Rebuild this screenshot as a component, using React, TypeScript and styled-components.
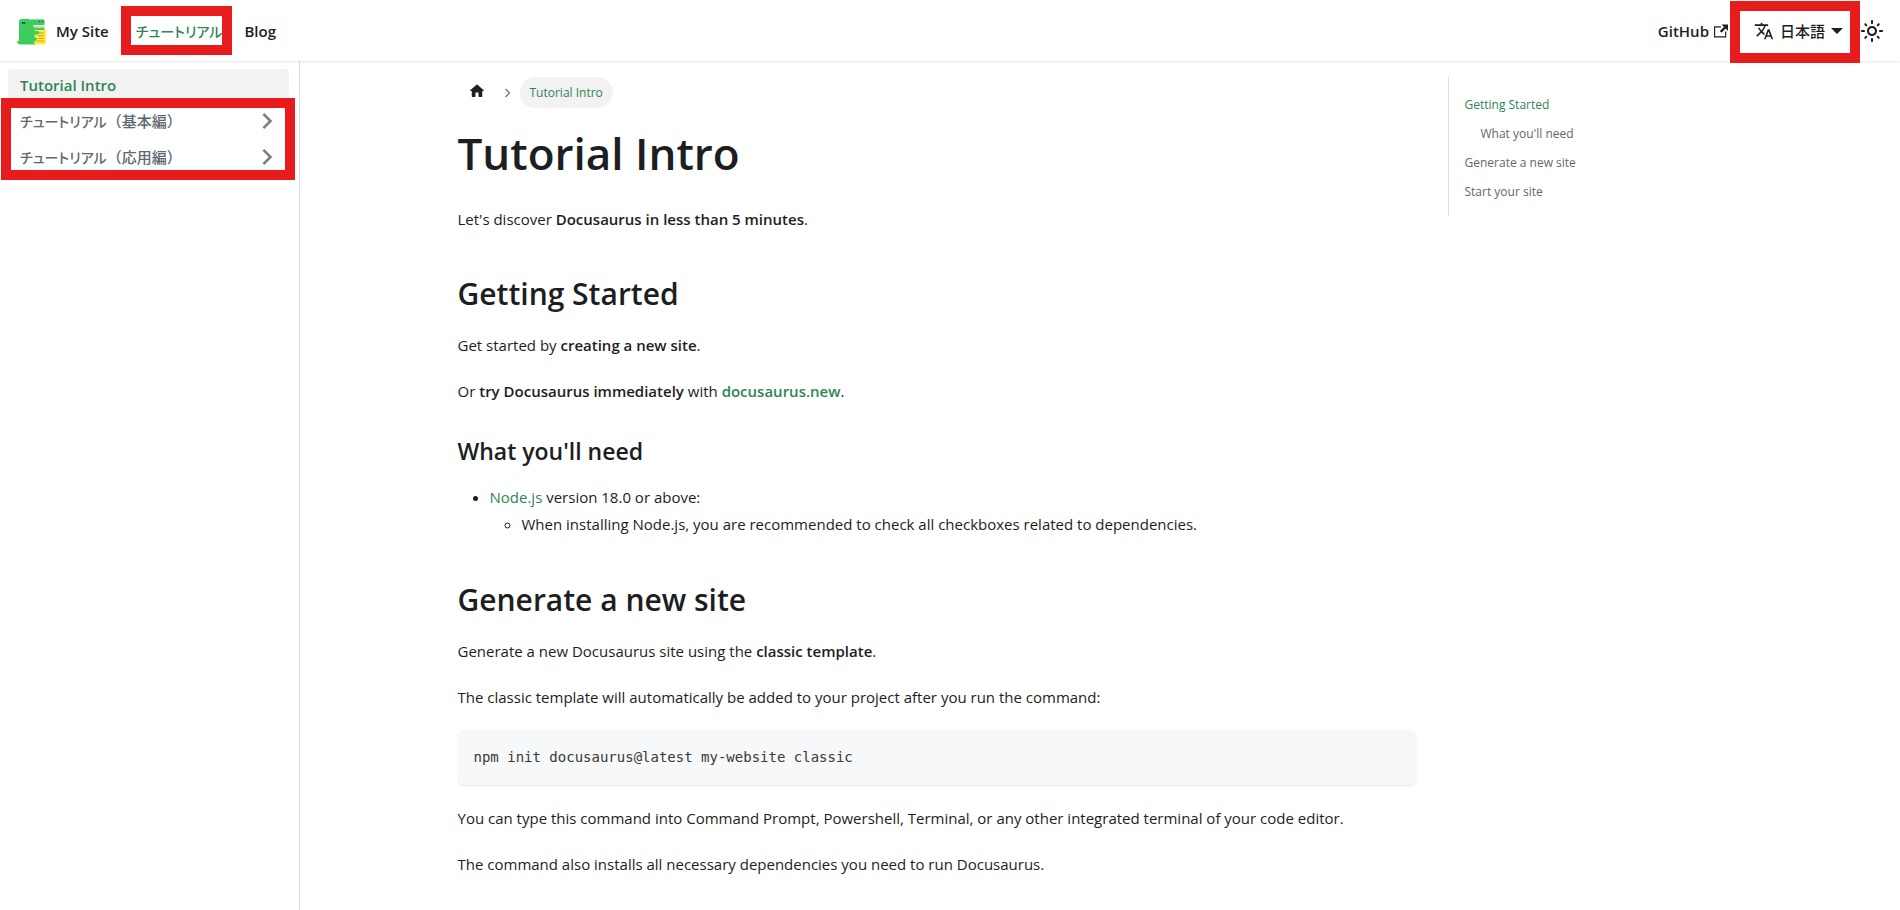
import React from "react";
import styled, { createGlobalStyle, css } from "styled-components";

const green = "#2e8555";
const ink = "#1c1e21";
const grey = "#606770";

const GlobalStyle = createGlobalStyle`
  *, *::before, *::after { box-sizing: border-box; }
  body {
    margin: 0;
    background: #fff;
    color: ${ink};
    font: 400 15px/26px "Open Sans", "Noto Sans CJK JP", sans-serif;
  }
  a { color: ${green}; text-decoration: none; }
  strong { font-weight: 600; }
`;

const Page = styled.div`
  display: flex;
  flex-direction: column;
  min-height: 100vh;
`;

const Navbar = styled.nav`
  display: flex;
  justify-content: space-between;
  align-items: center;
  height: 61px;
  padding: 0 16px;
  background: #fff;
  box-shadow: 0 1px 2px rgba(0, 0, 0, 0.1);
  z-index: 1;
`;

const NavGroup = styled.div`
  display: flex;
  align-items: center;
`;

const japanese = css`
  font-family: "Noto Sans CJK JP", sans-serif;
  font-weight: 500;
`;

const Kana = styled.span`
  font-size: 14px;
  font-feature-settings: "palt";
`;

const Brand = styled.a`
  display: flex;
  align-items: center;
  gap: 8px;
  margin-right: 17px;
  color: ${ink};
  font-weight: 600;
`;

const NavLink = styled.a<{ $active?: boolean; $jp?: boolean }>`
  position: relative;
  display: flex;
  align-items: center;
  gap: 5px;
  padding: 4px 12px;
  color: ${(p) => (p.$active ? green : ink)};
  font-weight: 600;
  ${(p) =>
    p.$jp &&
    css`
      ${japanese}
      padding: 4px 10px;
    `}
`;

const LocaleButton = styled.button`
  position: relative;
  display: flex;
  align-items: center;
  gap: 6px;
  padding: 4px 13px 4px 14px;
  border: 0;
  background: none;
  color: ${ink};
  font-size: 15px;
  line-height: 26px;
  ${japanese}
`;

const Caret = styled.span`
  border: 6px solid transparent;
  border-top-color: currentColor;
  border-bottom: 0;
`;

const ThemeButton = styled.button`
  display: flex;
  align-items: center;
  justify-content: center;
  width: 32px;
  height: 32px;
  margin-right: -4px;
  padding: 0;
  border: 0;
  background: none;
  color: ${ink};
`;

const Frame = styled.span<{ $inset: string }>`
  position: absolute;
  inset: ${(p) => p.$inset};
  border: 10px solid #e81c1c;
  pointer-events: none;
  z-index: 2;
`;

const Body = styled.div`
  display: flex;
  flex: 1;
`;

const Sidebar = styled.aside`
  flex: 0 0 300px;
  padding: 8px 10px 8px 8px;
  border-right: 1px solid #dadde1;
`;

const MenuList = styled.ul`
  position: relative;
  display: flex;
  flex-direction: column;
  gap: 4px;
  margin: 0;
  padding: 0;
  list-style: none;
`;

const MenuLink = styled.a<{ $active?: boolean; $jp?: boolean }>`
  display: flex;
  align-items: center;
  justify-content: space-between;
  height: 32px;
  padding: 0 6px 0 12px;
  border-radius: 4px;
  font-weight: 600;
  color: ${(p) => (p.$active ? green : grey)};
  background: ${(p) => (p.$active ? "#f2f2f2" : "transparent")};
  ${(p) => p.$jp && japanese}
`;

const Main = styled.main`
  flex: 1;
  min-width: 0;
  padding-left: 3px;
`;

const Container = styled.div`
  display: grid;
  grid-template-columns: 3fr 1fr;
  max-width: 1320px;
  margin: 0 auto;
`;

const Article = styled.article`
  min-width: 0;
  padding: 16px;
`;

const Crumbs = styled.ul`
  display: flex;
  align-items: center;
  margin: 0 0 13px;
  padding: 0;
  list-style: none;
  font-size: 12px;
  line-height: 19px;
`;

const Crumb = styled.li`
  display: flex;
  align-items: center;
`;

const HomeLink = styled.a`
  display: flex;
  padding: 4px 10px 8px;
  color: ${ink};
`;

const CrumbArrow = styled.span`
  display: flex;
  margin: 0 9px 0 8px;
  color: #77797c;
`;

const CrumbPill = styled.span`
  padding: 6px 10px;
  border-radius: 32px;
  background: #f2f2f2;
  color: ${green};
`;

const H1 = styled.h1`
  margin: 0 0 21px;
  font-size: 44px;
  line-height: 64px;
  font-weight: 600;
`;

const H2 = styled.h2`
  margin: 40px 0 16px;
  font-size: 30px;
  line-height: 44px;
  font-weight: 600;
`;

const H3 = styled.h3`
  margin: 30px 0 16px;
  font-size: 23px;
  line-height: 34px;
  font-weight: 600;
`;

const P = styled.p`
  margin: 0 0 20px;
`;

const List = styled.ul`
  margin: 0;
  padding-left: 32px;
  line-height: 27px;
`;

const CodeBlock = styled.pre`
  margin: 0 0 20px;
  padding: 16px;
  border-radius: 6px;
  background: #f6f8fa;
  box-shadow: 0 1px 2px rgba(0, 0, 0, 0.1);
  color: #393a34;
  line-height: 23px;
`;

const CodeText = styled.code`
  font-family: "DejaVu Sans Mono", monospace;
  font-size: 14px;
`;

const TocColumn = styled.div`
  padding: 16px;
`;

const Toc = styled.ul`
  display: flex;
  flex-direction: column;
  gap: 8px;
  margin: 0;
  padding: 17px 16px 14px;
  border-left: 1px solid #dadde1;
  list-style: none;
  font-size: 12px;
  line-height: 21px;
`;

const TocItem = styled.li<{ $level?: number }>`
  padding-left: ${(p) => (p.$level ? 16 : 0)}px;
`;

const TocLink = styled.a<{ $active?: boolean }>`
  color: ${(p) => (p.$active ? green : grey)};
`;

function Icon({ d, size }: { d: string; size: number }) {
  return (
    <svg width={size} height={size} viewBox="0 0 24 24" fill="currentColor" aria-hidden="true">
      <path d={d} />
    </svg>
  );
}

const HOME =
  "M10 19v-5h4v5c0 .55.45 1 1 1h3c.55 0 1-.45 1-1v-7h1.7c.46 0 .68-.57.33-.87L12.67 3.6c-.38-.34-.96-.34-1.34 0l-8.36 7.53c-.34.3-.13.87.33.87H5v7c0 .55.45 1 1 1h3c.55 0 1-.45 1-1z";
const EXTERNAL =
  "M21 13v10h-21v-19h12v2h-10v15h17v-8h2zm3-12h-10.988l4.035 4-6.977 7.07 2.828 2.828 6.977-7.07 4.125 4.172v-11z";
const TRANSLATE =
  "M12.87 15.07l-2.54-2.51.03-.03c1.74-1.94 2.98-4.17 3.71-6.53H17V4h-7V2H8v2H1v1.99h11.17C11.5 7.92 10.44 9.75 9 11.35 8.07 10.32 7.3 9.19 6.69 8h-2c.73 1.63 1.73 3.17 2.98 4.56l-5.09 5.02L4 19l5-5 3.11 3.11.76-2.04zM18.5 10h-2L12 22h2l1.12-3h4.75L21 22h2l-4.5-12zm-2.62 7l1.62-4.33L19.12 17h-3.24z";
const SUN =
  "M12,9c1.65,0,3,1.35,3,3s-1.35,3-3,3s-3-1.35-3-3S10.35,9,12,9 M12,7c-2.76,0-5,2.24-5,5s2.24,5,5,5s5-2.24,5-5 S14.76,7,12,7L12,7z M2,13l2,0c0.55,0,1-0.45,1-1s-0.45-1-1-1l-2,0c-0.55,0-1,0.45-1,1S1.45,13,2,13z M20,13l2,0c0.55,0,1-0.45,1-1 s-0.45-1-1-1l-2,0c-0.55,0-1,0.45-1,1S19.45,13,20,13z M11,2v2c0,0.55,0.45,1,1,1s1-0.45,1-1V2c0-0.55-0.45-1-1-1S11,1.45,11,2z M11,20v2c0,0.55,0.45,1,1,1s1-0.45,1-1v-2c0-0.55-0.45-1-1-1C11.45,19,11,19.45,11,20z M5.99,4.58c-0.39-0.39-1.03-0.39-1.41,0 c-0.39,0.39-0.39,1.03,0,1.41l1.06,1.06c0.39,0.39,1.03,0.39,1.41,0s0.39-1.03,0-1.41L5.99,4.58z M18.36,16.95 c-0.39-0.39-1.03-0.39-1.41,0c-0.39,0.39-0.39,1.03,0,1.41l1.06,1.06c0.39,0.39,1.03,0.39,1.41,0c0.39-0.39,0.39-1.03,0-1.41 L18.36,16.95z M19.42,5.99c0.39-0.39,0.39-1.03,0-1.41c-0.39-0.39-1.03-0.39-1.41,0l-1.06,1.06c-0.39,0.39-0.39,1.03,0,1.41 s1.03,0.39,1.41,0L19.42,5.99z M7.05,18.36c0.39-0.39,0.39-1.03,0-1.41c-0.39-0.39-1.03-0.39-1.41,0l-1.06,1.06 c-0.39,0.39-0.39,1.03,0,1.41s1.03,0.39,1.41,0L7.05,18.36z";

function Chevron() {
  return (
    <svg width="32" height="32" viewBox="0 0 24 24" fill="#7f7f7f" aria-hidden="true">
      <path d="M8.6 16.6 13.2 12 8.6 7.4 10 6l6 6-6 6z" />
    </svg>
  );
}

function Logo() {
  return (
    <svg width="32" height="32" viewBox="0 0 32 32" aria-hidden="true">
      <path
        fill="#3ecc5f"
        d="M3 7.500q-.8-.7 0-1.300-.3-1 .8-1.200.2-1.100 1.300-.8.700-.9 1.500-.1.800-.8 1.500 0 .8-.8 1.500 0 .8-.8 1.500 0 .8-.8 1.500 0 .7-.6 1.500.4h1.500l11-.3q2 0 2 1.800v4H20v19.500H4.500Q2 29.500 .6 26.300q1.400.5 2.400-1z"
      />
      <path fill="#fff" d="M17.500 10h12v2.600h-12z" />
      <path d="m18 12.200 1.500-1.600 1.500 1.600 1.500-1.600 1.500 1.600 1.500-1.600 1.500 1.600 1.500-1.600" fill="none" stroke="#8a8a8a" strokeWidth=".6" />
      <path fill="#3ecc5f" d="M16 12.600h12.500v2.500H16z" />
      <path fill="#ffea3a" d="M20 15.300H27q1.500-.2 2-1.700l1 1.200V27q0 2.500-2.500 2.500H18.500V15.300z" />
      <path d="M22 18h6M22 20.700h6M22 23.400h6M21 26.100h7" stroke="#a89a2c" strokeWidth=".8" />
      <path fill="#3ecc5f" d="M15 16h6.500q1.800 0 1.800 1.700t-1.800 1.800H15zM15 22.500h4.500q1.500 0 1.500 1.700T19.500 26H15z" />
      <path d="M6 8.800q1.600-2.400 3.200 0M22.800 6.500h1.400M25.800 6.500h1.400" fill="none" stroke="#143d1e" strokeWidth="1.100" />
    </svg>
  );
}

export default function App() {
  return (
    <>
      <GlobalStyle />
      <Page>
        <Navbar>
          <NavGroup>
            <Brand href="#">
              <Logo />
              <span>My Site</span>
            </Brand>
            <NavLink href="#" $active $jp>
              <Kana>チュートリアル</Kana>
              <Frame $inset="-8px 0 -7px -5px" />
            </NavLink>
            <NavLink href="#">Blog</NavLink>
          </NavGroup>
          <NavGroup>
            <NavLink href="#">
              GitHub
              <Icon d={EXTERNAL} size={14} />
            </NavLink>
            <LocaleButton type="button">
              <Icon d={TRANSLATE} size={20} />
              日本語
              <Caret />
              <Frame $inset="-13px -4px -15px -10px" />
            </LocaleButton>
            <ThemeButton type="button" aria-label="Switch between dark and light mode">
              <Icon d={SUN} size={24} />
            </ThemeButton>
          </NavGroup>
        </Navbar>
        <Body>
          <Sidebar>
            <MenuList>
              <li>
                <MenuLink href="#" $active>
                  Tutorial Intro
                </MenuLink>
              </li>
              <li>
                <MenuLink href="#" $jp>
                  <span>
                    <Kana>チュートリアル</Kana>（基本編）
                  </span>
                  <Chevron />
                </MenuLink>
              </li>
              <li>
                <MenuLink href="#" $jp>
                  <span>
                    <Kana>チュートリアル</Kana>（応用編）
                  </span>
                  <Chevron />
                </MenuLink>
              </li>
              <Frame as="li" $inset="29px -6px -7px -7px" />
            </MenuList>
          </Sidebar>
          <Main>
            <Container>
              <Article>
                <Crumbs>
                  <Crumb>
                    <HomeLink href="#" aria-label="Home page">
                      <Icon d={HOME} size={18} />
                    </HomeLink>
                    <CrumbArrow>
                      <svg width="7" height="10" viewBox="0 0 7 10" aria-hidden="true">
                        <path d="m1.500 1 4 4-4 4" fill="none" stroke="currentColor" strokeWidth="1.300" />
                      </svg>
                    </CrumbArrow>
                  </Crumb>
                  <Crumb>
                    <CrumbPill>Tutorial Intro</CrumbPill>
                  </Crumb>
                </Crumbs>
                <H1>Tutorial Intro</H1>
                <P>
                  Let's discover <strong>Docusaurus in less than 5 minutes</strong>.
                </P>
                <H2>Getting Started</H2>
                <P>
                  Get started by <strong>creating a new site</strong>.
                </P>
                <P>
                  Or <strong>try Docusaurus immediately</strong> with{" "}
                  <strong>
                    <a href="#">docusaurus.new</a>
                  </strong>
                  .
                </P>
                <H3>What you'll need</H3>
                <List>
                  <li>
                    <a href="#">Node.js</a> version 18.0 or above:
                    <List>
                      <li>When installing Node.js, you are recommended to check all checkboxes related to dependencies.</li>
                    </List>
                  </li>
                </List>
                <H2>Generate a new site</H2>
                <P>
                  Generate a new Docusaurus site using the <strong>classic template</strong>.
                </P>
                <P>The classic template will automatically be added to your project after you run the command:</P>
                <CodeBlock>
                  <CodeText>npm init docusaurus@latest my-website classic</CodeText>
                </CodeBlock>
                <P>
                  You can type this command into Command Prompt, Powershell, Terminal, or any other integrated terminal
                  of your code editor.
                </P>
                <P>The command also installs all necessary dependencies you need to run Docusaurus.</P>
              </Article>
              <TocColumn>
                <Toc>
                  <TocItem>
                    <TocLink href="#" $active>
                      Getting Started
                    </TocLink>
                  </TocItem>
                  <TocItem $level={1}>
                    <TocLink href="#">What you'll need</TocLink>
                  </TocItem>
                  <TocItem>
                    <TocLink href="#">Generate a new site</TocLink>
                  </TocItem>
                  <TocItem>
                    <TocLink href="#">Start your site</TocLink>
                  </TocItem>
                </Toc>
              </TocColumn>
            </Container>
          </Main>
        </Body>
      </Page>
    </>
  );
}
